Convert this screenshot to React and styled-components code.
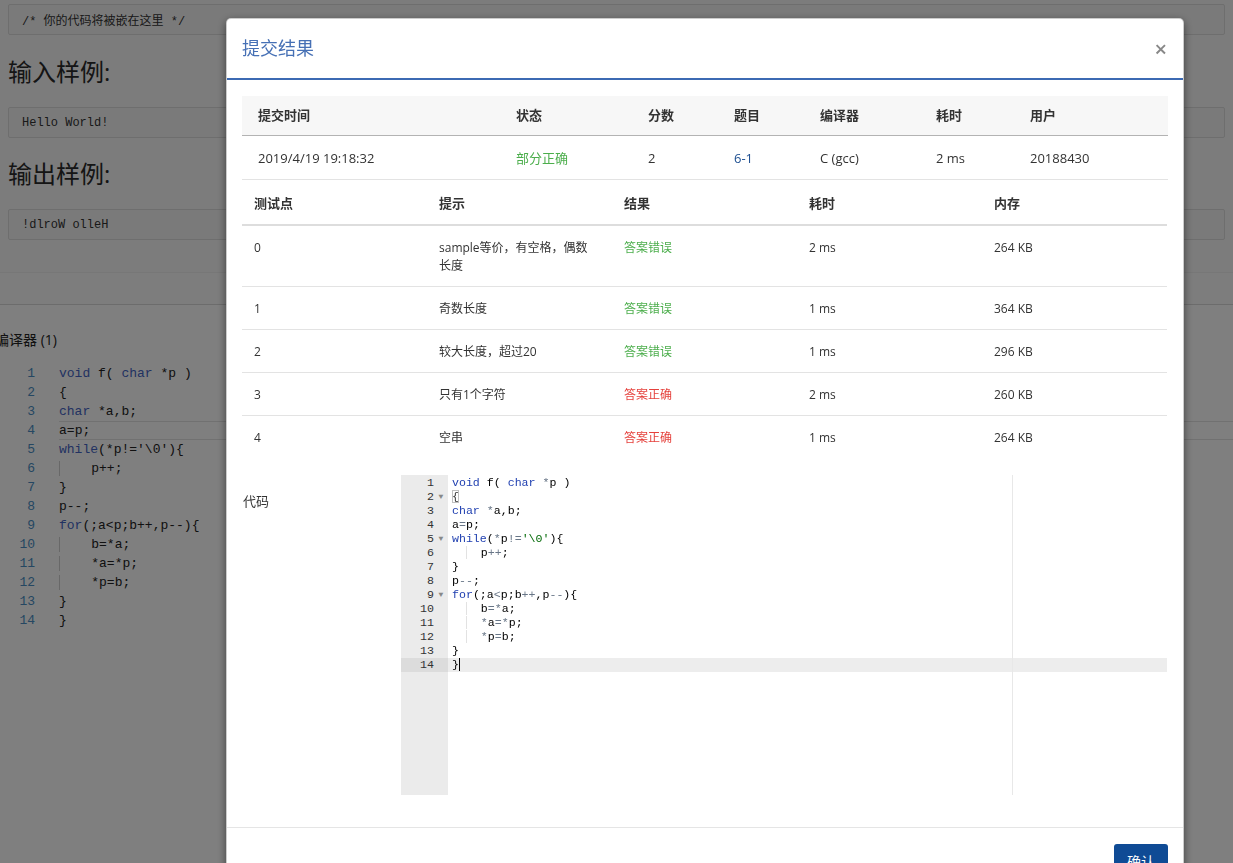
import React from "react";
import styled, { createGlobalStyle, css } from "styled-components";

const GlobalStyle = createGlobalStyle`
  html, body {
    margin: 0;
    padding: 0;
    height: 100%;
    overflow: hidden;
    background: #fff;
  }

  body {
    font-family: "Open Sans", "Noto Sans CJK SC", sans-serif;
    color: #333;
  }

  * {
    box-sizing: border-box;
  }
`;

const codeLines = [
  "void f( char *p )",
  "{",
  "char *a,b;",
  "a=p;",
  "while(*p!='\\0'){",
  "    p++;",
  "}",
  "p--;",
  "for(;a<p;b++,p--){",
  "    b=*a;",
  "    *a=*p;",
  "    *p=b;",
  "}",
  "}",
];

const foldLines = [2, 5, 9];

const summary = {
  time: "2019/4/19 19:18:32",
  status: "部分正确",
  score: "2",
  problem: "6-1",
  compiler: "C (gcc)",
  cost: "2 ms",
  user: "20188430",
};

const cases = [
  { id: 0, hint: "sample等价，有空格，偶数长度", result: "答案错误", ok: true, time: "2 ms", mem: "264 KB" },
  { id: 1, hint: "奇数长度", result: "答案错误", ok: true, time: "1 ms", mem: "364 KB" },
  { id: 2, hint: "较大长度，超过20", result: "答案错误", ok: true, time: "1 ms", mem: "296 KB" },
  { id: 3, hint: "只有1个字符", result: "答案正确", ok: false, time: "2 ms", mem: "260 KB" },
  { id: 4, hint: "空串", result: "答案正确", ok: false, time: "1 ms", mem: "264 KB" },
];

const tokenize = (text) =>
  text
    .split(/(\b(?:void|char|while|for)\b|'[^']*'|[*=!<+-]+)/)
    .filter(Boolean)
    .map((t) => {
      if (/^(void|char|while|for)$/.test(t)) return { kind: "keyword", t };
      if (t.startsWith("'")) return { kind: "string", t };
      if (/^[*=!<+-]+$/.test(t)) return { kind: "operator", t };
      return { kind: "plain", t };
    });

/* ---------- page under the dialog ---------- */

const Page = styled.div`
  width: 100%;
`;

const SamplePanel = styled.div`
  display: flex;
  flex-direction: column;
  padding: 4px 8px 32px 8px;
  background: #f8f8f8;
  border-bottom: 1px solid #eee;
`;

const SampleBox = styled.pre`
  margin: 0;
  height: 31px;
  padding: 0 13px;
  display: flex;
  align-items: center;
  background: #f5f5f5;
  border: 1px solid #dcdcdc;
  border-radius: 2px;
  font-family: "Liberation Mono", "Noto Sans CJK SC", monospace;
  font-size: 12px;
  color: #333;
`;

const SampleTitle = styled.h3`
  margin: ${({ $first }) => ($first ? "24px 0 22px" : "23px 0 22px")};
  font-size: 24px;
  line-height: 26px;
  font-weight: 400;
  color: #2a2a2a;
`;

const Band = styled.div`
  height: 32px;
  background: #fbfbfb;
  border-bottom: 1px solid #d8d8d8;
`;

const CompilerLabel = styled.div`
  margin: 25px 0 0 -5px;
  font-size: 14px;
  line-height: 20px;
  color: #222;
`;

const BgCode = styled.div`
  margin-top: 14px;
  font-family: "Liberation Mono", monospace;
  font-size: 13px;
  line-height: 19px;
`;

const BgLine = styled.div`
  display: grid;
  grid-template-columns: 35px 1fr;
  column-gap: 24px;
  height: 19px;
`;

const BgNumber = styled.span`
  text-align: right;
  color: #4a8ec4;
`;

const BgText = styled.span`
  white-space: pre;
  color: #222;

  ${({ $active }) =>
    $active &&
    css`
      border-top: 1px solid #e2e2e2;
      border-bottom: 1px solid #e2e2e2;
      line-height: 17px;
    `}
`;

const BgGuide = styled.span`
  border-left: 1px solid #d0d0d0;
`;

const BgToken = styled.span`
  color: ${({ $kind }) => ($kind === "keyword" ? "#4464c4" : "#222")};
`;

/* ---------- dialog ---------- */

const Overlay = styled.div`
  position: fixed;
  inset: 0;
  background: rgba(0, 0, 0, 0.5);
  padding: 18px 0 0 226px;
`;

const Dialog = styled.div`
  width: 958px;
  background: #fff;
  border: 1px solid rgba(0, 0, 0, 0.2);
  border-radius: 5px;
  box-shadow: 0 3px 9px rgba(0, 0, 0, 0.5);
`;

const DialogHeader = styled.div`
  display: flex;
  align-items: center;
  justify-content: space-between;
  padding: 14px 16px 15px 15px;
  border-bottom: 2px solid #3c6ab3;
`;

const DialogTitle = styled.h4`
  margin: 0;
  font-size: 18px;
  line-height: 30px;
  font-weight: 400;
  color: #4670b5;
`;

const CloseButton = styled.button`
  padding: 0;
  border: 0;
  background: transparent;
  font-family: "Open Sans", sans-serif;
  font-size: 22px;
  line-height: 22px;
  font-weight: 600;
  color: #888;
  cursor: pointer;
`;

const DialogBody = styled.div`
  padding: 16px 16px 16px 15px;
`;

const DataTable = styled.table`
  width: 100%;
  border-collapse: collapse;
  table-layout: fixed;
`;

const SummaryHead = styled.th`
  width: ${({ $w }) => $w}px;
  padding: 11px 16px;
  line-height: 17px;
  font-size: 13px;
  font-weight: 700;
  text-align: left;
  color: #333;
  background: #f7f7f7;
  border-bottom: 1px solid #b3b3b3;
`;

const SummaryCell = styled.td`
  padding: 13px 16px 11px;
  line-height: 19px;
  font-size: 13px;
  color: ${({ $tone }) =>
    $tone === "green" ? "#4cae4c" : $tone === "link" ? "#1d4f91" : "#333"};
  border-bottom: 1px solid #e3e3e3;
`;

const CaseHead = styled.th`
  padding: 14px 12px 12px;
  line-height: 18px;
  font-size: 13px;
  font-weight: 700;
  text-align: left;
  color: #333;
  border-bottom: 2px solid #dddddd;
`;

const CaseCell = styled.td`
  padding: 13px 12px 11px;
  line-height: 18px;
  font-size: 12px;
  vertical-align: top;
  color: ${({ $tone }) =>
    $tone === "green" ? "#4cae4c" : $tone === "red" ? "#e5413c" : "#333"};
  border-bottom: ${({ $last }) => ($last ? "0" : "1px solid #e3e3e3")};
`;

const HintText = styled.span`
  display: block;
  max-width: 154px;
`;

const CodeRow = styled.div`
  display: flex;
  margin: 17px 0 16px 0;
`;

const CodeLabel = styled.label`
  width: 159px;
  padding: 17px 0 0 1px;
  font-size: 13px;
  line-height: 18px;
  color: #333;
`;

const Editor = styled.div`
  flex: 1;
  display: flex;
  height: 320px;
  font-family: "Liberation Mono", monospace;
  font-size: 11.6px;
  line-height: 14px;
  overflow: hidden;
`;

const Gutter = styled.div`
  width: 47px;
  padding-top: 1px;
  background: #ebebeb;
  color: #333;
`;

const GutterCell = styled.div`
  display: flex;
  height: 14px;
  color: #333;
  background: ${({ $active }) => ($active ? "#dcdcdc" : "transparent")};
`;

const GutterNumber = styled.span`
  flex: 1;
  text-align: right;
`;

const FoldMark = styled.span`
  width: 14px;
  text-align: center;
  font-size: 8px;
  color: #888;
`;

const CodeArea = styled.div`
  position: relative;
  flex: 1;
  padding-top: 1px;

  &::after {
    content: "";
    position: absolute;
    top: 0;
    bottom: 0;
    left: 564px;
    border-left: 1px solid #e8e8e8;
  }
`;

const CodeLine = styled.div`
  height: 14px;
  padding-left: 4px;
  white-space: pre;
  background: ${({ $active }) => ($active ? "#ededed" : "transparent")};
`;

const IndentGuide = styled.span`
  border-right: 1px solid #e2e2e2;
`;

const Token = styled.span`
  color: ${({ $kind }) =>
    $kind === "keyword"
      ? "#1f3fb0"
      : $kind === "string"
      ? "#036a07"
      : $kind === "operator"
      ? "#687687"
      : "#000"};
`;

const BracketMark = styled.span`
  outline: 1px solid #c0c0c0;
  outline-offset: -1px;
`;

const Caret = styled.span`
  border-left: 1px solid #000;
`;

const DialogFooter = styled.div`
  display: flex;
  justify-content: flex-end;
  padding: 16px 15px;
  border-top: 1px solid #e5e5e5;
`;

const ConfirmButton = styled.button`
  width: 54px;
  height: 34px;
  border: 0;
  border-radius: 3px;
  background: #0f4b95;
  color: #fff;
  font-family: "Noto Sans CJK SC", sans-serif;
  font-size: 14px;
`;

const summaryCols = [
  ["提交时间", 258],
  ["状态", 132],
  ["分数", 86],
  ["题目", 86],
  ["编译器", 116],
  ["耗时", 94],
  ["用户", 154],
];

function BackgroundPage() {
  return (
    <Page>
      <SamplePanel>
        <SampleBox>/* 你的代码将被嵌在这里 */</SampleBox>
        <SampleTitle $first>输入样例:</SampleTitle>
        <SampleBox>Hello World!</SampleBox>
        <SampleTitle>输出样例:</SampleTitle>
        <SampleBox>!dlroW olleH</SampleBox>
      </SamplePanel>
      <Band />
      <CompilerLabel>编译器 (1)</CompilerLabel>
      <BgCode>
        {codeLines.map((line, i) => {
          const indented = line.startsWith("    ");
          const body = indented ? line.slice(4) : line;
          return (
            <BgLine key={i}>
              <BgNumber>{i + 1}</BgNumber>
              <BgText $active={i === 3}>
                {indented && <BgGuide>{"    "}</BgGuide>}
                {tokenize(body).map((tok, j) => (
                  <BgToken key={j} $kind={tok.kind}>
                    {tok.t}
                  </BgToken>
                ))}
              </BgText>
            </BgLine>
          );
        })}
      </BgCode>
    </Page>
  );
}

function CodeView() {
  const last = codeLines.length - 1;

  return (
    <Editor>
      <Gutter>
        {codeLines.map((_, i) => (
          <GutterCell key={i} $active={i === last}>
            <GutterNumber>{i + 1}</GutterNumber>
            <FoldMark>{foldLines.includes(i + 1) ? "▼" : ""}</FoldMark>
          </GutterCell>
        ))}
      </Gutter>
      <CodeArea>
        {codeLines.map((line, i) => {
          const indented = line.startsWith("    ");
          const body = indented ? line.slice(4) : line;
          return (
            <CodeLine key={i} $active={i === last}>
              {indented && (
                <>
                  <IndentGuide>{"  "}</IndentGuide>
                  {"  "}
                </>
              )}
              {i === 1 ? (
                <BracketMark>{body}</BracketMark>
              ) : (
                tokenize(body).map((tok, j) => (
                  <Token key={j} $kind={tok.kind}>
                    {tok.t}
                  </Token>
                ))
              )}
              {i === last && <Caret />}
            </CodeLine>
          );
        })}
      </CodeArea>
    </Editor>
  );
}

export default function App() {
  return (
    <>
      <GlobalStyle />
      <BackgroundPage />
      <Overlay>
        <Dialog>
          <DialogHeader>
            <DialogTitle>提交结果</DialogTitle>
            <CloseButton>×</CloseButton>
          </DialogHeader>
          <DialogBody>
            <DataTable>
              <thead>
                <tr>
                  {summaryCols.map(([label, w]) => (
                    <SummaryHead key={label} $w={w}>
                      {label}
                    </SummaryHead>
                  ))}
                </tr>
              </thead>
              <tbody>
                <tr>
                  <SummaryCell>{summary.time}</SummaryCell>
                  <SummaryCell $tone="green">{summary.status}</SummaryCell>
                  <SummaryCell>{summary.score}</SummaryCell>
                  <SummaryCell $tone="link">{summary.problem}</SummaryCell>
                  <SummaryCell>{summary.compiler}</SummaryCell>
                  <SummaryCell>{summary.cost}</SummaryCell>
                  <SummaryCell>{summary.user}</SummaryCell>
                </tr>
              </tbody>
            </DataTable>
            <DataTable>
              <thead>
                <tr>
                  <CaseHead>测试点</CaseHead>
                  <CaseHead>提示</CaseHead>
                  <CaseHead>结果</CaseHead>
                  <CaseHead>耗时</CaseHead>
                  <CaseHead>内存</CaseHead>
                </tr>
              </thead>
              <tbody>
                {cases.map((c, i) => (
                  <tr key={c.id}>
                    <CaseCell $last={i === cases.length - 1}>{c.id}</CaseCell>
                    <CaseCell $last={i === cases.length - 1}>
                      <HintText>{c.hint}</HintText>
                    </CaseCell>
                    <CaseCell $last={i === cases.length - 1} $tone={c.ok ? "green" : "red"}>
                      {c.result}
                    </CaseCell>
                    <CaseCell $last={i === cases.length - 1}>{c.time}</CaseCell>
                    <CaseCell $last={i === cases.length - 1}>{c.mem}</CaseCell>
                  </tr>
                ))}
              </tbody>
            </DataTable>
            <CodeRow>
              <CodeLabel>代码</CodeLabel>
              <CodeView />
            </CodeRow>
          </DialogBody>
          <DialogFooter>
            <ConfirmButton>确认</ConfirmButton>
          </DialogFooter>
        </Dialog>
      </Overlay>
    </>
  );
}
